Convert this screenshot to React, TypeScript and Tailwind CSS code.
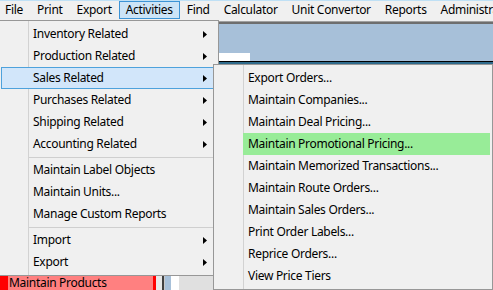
import React from "react";

const Arrow = () => (
  <svg width="4" height="7" viewBox="0 0 4 7" className="block">
    <path d="M0 0L4 3.5L0 7Z" fill="#000" />
  </svg>
);

const barItems = ["File", "Print", "Export", "Activities", "Find", "Calculator", "Unit Convertor", "Reports", "Administration"];

type MainItem = { label: string; arrow?: boolean; hot?: boolean } | "sep";

const mainItems: MainItem[] = [
  { label: "Inventory Related", arrow: true },
  { label: "Production Related", arrow: true },
  { label: "Sales Related", arrow: true, hot: true },
  { label: "Purchases Related", arrow: true },
  { label: "Shipping Related", arrow: true },
  { label: "Accounting Related", arrow: true },
  "sep",
  { label: "Maintain Label Objects" },
  { label: "Maintain Units..." },
  { label: "Manage Custom Reports" },
  "sep",
  { label: "Import", arrow: true },
  { label: "Export", arrow: true },
];

const subItems = [
  "Export Orders...",
  "Maintain Companies...",
  "Maintain Deal Pricing...",
  "Maintain Promotional Pricing...",
  "Maintain Memorized Transactions...",
  "Maintain Route Orders...",
  "Maintain Sales Orders...",
  "Print Order Labels...",
  "Reprice Orders...",
  "View Price Tiers",
];

export default function App() {
  return (
    <div className="relative w-[493px] h-[290px] overflow-hidden bg-[#f0f0f0] font-['Noto_Sans',sans-serif] text-[12px] tracking-[-0.3px] text-black leading-none">
      <div className="flex flex-col h-full">
        {/* menu bar */}
        <div className="h-[21px] border-t border-[#bfe0f5] bg-[#f0f0f0] flex items-start whitespace-nowrap overflow-hidden">
          <div className="flex ml-[-2px]">
            {barItems.map((b) => (
              <div
                key={b}
                className={
                  "h-[18px] px-[6px] border flex items-center " +
                  (b === "Activities" ? "bg-[#cce4f7] border-[#3d94d6]" : "border-transparent")
                }
              >
                {b}
              </div>
            ))}
          </div>
        </div>
        <div className="h-[1px] bg-[#a0a0a0]" />
        <div className="h-[2px] bg-[#6e6e6e]" />
        <div className="h-[29px] bg-[#a7c0d9]" />
        <div className="h-[8px] flex">
          <div className="w-[250px] bg-white" />
          <div className="flex-1 bg-[#a7c0d9]" />
        </div>
        <div className="h-[1px] bg-black" />
        <div className="h-[2px] bg-[#2f6b8c]" />
        <div className="flex-1 bg-[#f0f0f0]" />
        <div className="h-[14px] flex items-stretch">
          <div className="w-[8px] bg-[#ff0000]" />
          <div className="w-[145px] bg-[#ff8080] flex items-center pl-[1px] whitespace-nowrap">Maintain Products</div>
          <div className="w-[3px] bg-[#ff0000]" />
          <div className="w-[6px] bg-[#e8e8e8]" />
          <div className="w-[2px] bg-[#404040]" />
          <div className="w-[1px] bg-[#c8c8c8]" />
          <div className="w-[6px] bg-[#a7c0d9]" />
          <div className="w-[8px] bg-white" />
          <div className="flex-1 bg-[#e0e0e0]" />
        </div>
      </div>

      {/* main dropdown */}
      <div className="absolute left-[-2px] top-[20px] w-[221px] h-[256px] border border-[#979797] bg-[#f0f0f0] p-[2px] whitespace-nowrap">
        <div className="absolute left-[29px] top-0 bottom-0 w-[1px] bg-[#d2d2d2]" />
        {mainItems.map((it, i) =>
          it === "sep" ? (
            <div key={i} className="h-[4px] flex items-center pl-[28px] pr-[2px]">
              <div className="h-[1px] w-full bg-[#cfcfcf]" />
            </div>
          ) : (
            <div
              key={i}
              className={
                "relative h-[22px] flex items-center justify-between pl-[31px] pr-[8px] border " +
                (it.hot ? "bg-[#d2e6fa] border-[#4ea2dc]" : "border-transparent")
              }
            >
              <span>{it.label}</span>
              {it.arrow ? <Arrow /> : null}
            </div>
          )
        )}
      </div>

      {/* submenu */}
      <div className="absolute left-[213px] top-[64px] w-[280px] h-[226px] border border-[#979797] bg-[#f0f0f0] p-[2px] whitespace-nowrap">
        <div className="absolute left-[29px] top-0 bottom-0 w-[1px] bg-[#d2d2d2]" />
        {subItems.map((s) => (
          <div key={s} className="relative h-[22px] flex">
            <div className="w-[27px]" />
            <div
              className={
                "flex-1 flex items-center pl-[5px] " + (s === "Maintain Promotional Pricing..." ? "bg-[#98ec98]" : "")
              }
            >
              {s}
            </div>
          </div>
        ))}
      </div>
    </div>
  );
}
